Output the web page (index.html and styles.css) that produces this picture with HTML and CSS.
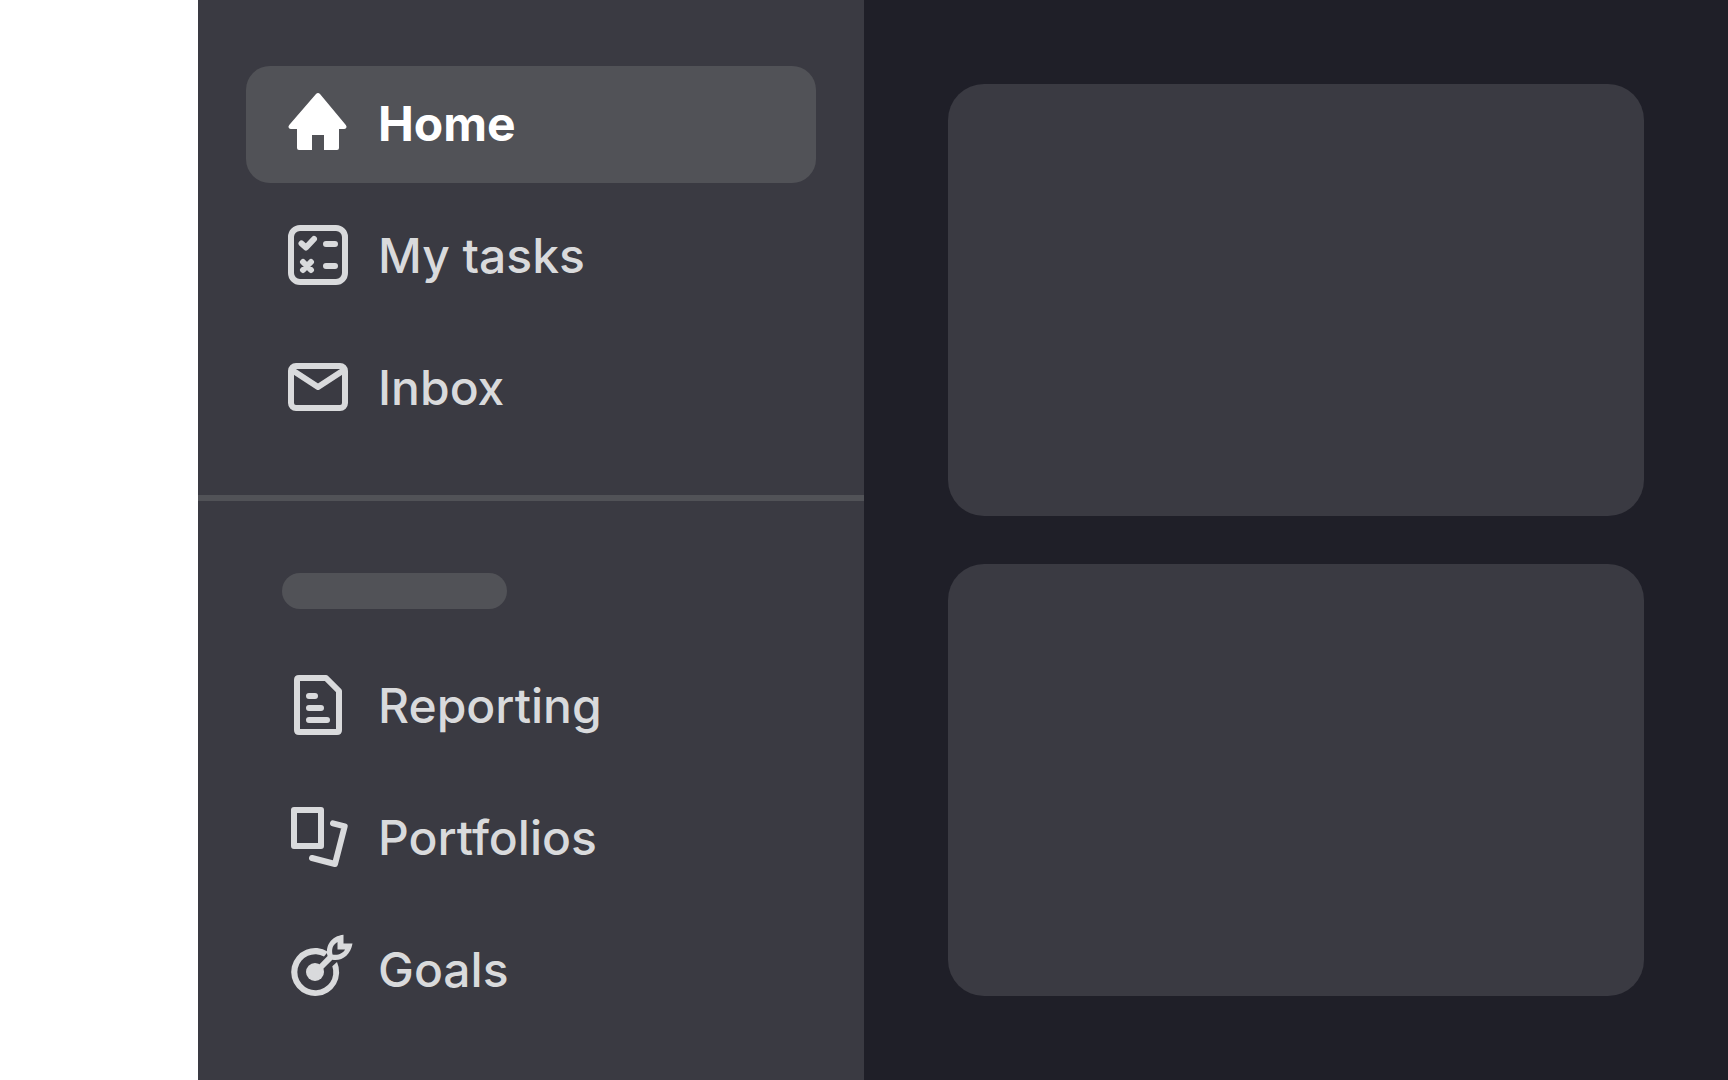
FILE: index.html
```html
<!DOCTYPE html>
<html lang="en">
<head>
<meta charset="utf-8">
<title>Home</title>
<link rel="stylesheet" href="styles.css">
</head>
<body>
<div class="app">
  <nav class="sidebar" aria-label="Main">
    <ul class="nav-list">
      <li><a class="nav-item active" href="#home" aria-current="page">
        <svg class="icon" viewBox="0 0 60 60" fill="currentColor" aria-hidden="true"><path d="M28 1Q30-1 32 1L57.800 32Q59 33.500 58.300 34.800Q57.500 36 56 36H51V55Q51 57 49 57H36V42H24V57H11Q9 57 9 55V36H3Q1.500 36 .7 34.800Q0 33.500 1.200 32Z"/></svg>
        <span>Home</span></a></li>
      <li><a class="nav-item" href="#tasks">
        <svg class="icon line" viewBox="0 0 60 60" aria-hidden="true"><rect x="3" y="3" width="54" height="54" rx="9"/><path d="M13.500 18.500L18 22.500L26 14M15 37L23 45M23 37L15 45M38 19H47M38 41H47"/></svg>
        <span>My tasks</span></a></li>
      <li><a class="nav-item" href="#inbox">
        <svg class="icon line" viewBox="0 0 60 60" aria-hidden="true"><rect x="3" y="9" width="54" height="42" rx="5"/><path d="M4 13L30 30L56 13"/></svg>
        <span>Inbox</span></a></li>
    </ul>
    <hr class="divider">
    <div class="section-label"></div>
    <ul class="nav-list">
      <li><a class="nav-item" href="#reporting">
        <svg class="icon line" viewBox="0 0 60 60" aria-hidden="true"><path d="M11 3H38L51 16V55Q51 57 49 57H11Q9 57 9 55V5Q9 3 11 3ZM21 21H27M21 33H33M21 45H39"/></svg>
        <span>Reporting</span></a></li>
      <li><a class="nav-item" href="#portfolios">
        <svg class="icon line" viewBox="0 0 60 60" aria-hidden="true"><path d="M6 3H33V39H6ZM45 16.300L56.700 19.300L47 57L24 51"/></svg>
        <span>Portfolios</span></a></li>
      <li><a class="nav-item" href="#goals">
        <svg class="icon" viewBox="0 0 60 60" fill="currentColor" aria-hidden="true"><circle cx="27" cy="33" r="9"/><path d="M40 12.700A24 24 0 1 0 49 23L44.300 27.200A18 18 0 1 1 36 17.400Z"/><path fill-rule="evenodd" d="M55.500-4.300V4.500H64.500C62.500 16 54 22.500 44.300 20.800L29 36L25 32L39.600 17C37 7 43-3 55.500-4.300ZM49.500 3C44.500 6 43.500 10 44.500 15.500C50 16.500 55 14.500 57 10.500H49.500Z"/></svg>
        <span>Goals</span></a></li>
    </ul>
  </nav>
  <main class="content">
    <section class="card"></section>
    <section class="card"></section>
  </main>
</div>
</body>
</html>
```
FILE: styles.css
```css
* { box-sizing: border-box; }
body {
  margin: 0;
  background: #fff;
  font-family: Inter, "Liberation Sans", sans-serif;
}
.app {
  display: grid;
  grid-template-columns: 666px 1fr;
  min-height: 100vh;
  margin-left: 198px;
}
.sidebar {
  padding: 66px 0 48px;
  background: #3a3a42;
}
.nav-list {
  display: flex;
  flex-direction: column;
  gap: 15px;
  margin: 0;
  padding: 0 48px;
  list-style: none;
}
.nav-item {
  display: flex;
  align-items: flex-start;
  gap: 30px;
  padding: 27px 42px 28px;
  border-radius: 24px;
  color: #d9dadc;
  font-size: 48px;
  line-height: 62px;
  font-weight: 500;
  text-decoration: none;
}
.nav-item.active {
  background: #515257;
  color: #fff;
  font-weight: 700;
}
.icon {
  flex: none;
  width: 60px;
  height: 60px;
  overflow: visible;
}
.line {
  fill: none;
  stroke: currentColor;
  stroke-width: 6;
  stroke-linecap: round;
  stroke-linejoin: round;
}
.divider {
  height: 6px;
  margin: 48px 0 72px;
  border: 0;
  background: #515257;
}
.section-label {
  width: 225px;
  height: 36px;
  margin: 0 84px 39px;
  border-radius: 18px;
  background: #515257;
}
.content {
  display: grid;
  grid-auto-rows: 1fr;
  gap: 48px;
  padding: 84px;
  background: #1f1f28;
}
.card {
  border-radius: 36px;
  background: #3a3a42;
}
```
